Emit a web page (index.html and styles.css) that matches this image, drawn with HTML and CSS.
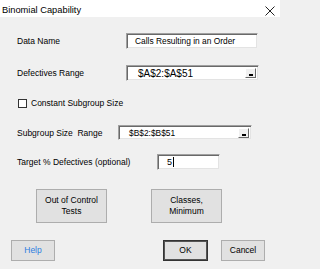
FILE: index.html
```html
<!DOCTYPE html>
<html>
<head>
<meta charset="utf-8">
<link rel="stylesheet" href="styles.css">
</head>
<body>
<div class="dialog">
  <div class="titlebar">
    <span class="title">Binomial Capability</span>
    <svg class="close" width="10" height="10" viewBox="0 0 10 10"><path d="M0.5 0.5L9.5 9.5M9.5 0.5L0.5 9.5" stroke="#222" stroke-width="1"/></svg>
  </div>
  <div class="content">
    <div class="row r1">
      <span class="label w1">Data Name</span>
      <div class="box b1"><span class="val">Calls Resulting in an Order</span></div>
    </div>
    <div class="row r2">
      <span class="label w1">Defectives Range</span>
      <div class="box b2"><span class="val v2">$A$2:$A$51</span><span class="pick"><i></i></span></div>
    </div>
    <div class="row r3">
      <span class="check"></span>
      <span class="label">Constant Subgroup Size</span>
    </div>
    <div class="row r4">
      <span class="label w4">Subgroup Size&nbsp; Range</span>
      <div class="box b4"><span class="val v4">$B$2:$B$51</span><span class="pick p4"><i></i></span></div>
    </div>
    <div class="row r5">
      <span class="label w5">Target % Defectives (optional)</span>
      <div class="box b5"><span class="val v5">5</span><span class="caret"></span></div>
    </div>
    <div class="row r6">
      <button class="btn big">Out of Control<br>Tests</button>
      <button class="btn big">Classes,<br>Minimum</button>
    </div>
    <div class="row r7">
      <button class="btn small help">Help</button>
      <span class="spacer"></span>
      <button class="btn small ok">OK</button>
      <button class="btn small">Cancel</button>
    </div>
  </div>
</div>
</body>
</html>
```
FILE: styles.css
```css
html, body { margin: 0; padding: 0; }
body {
  width: 280px; height: 269px; overflow: hidden;
  background: #f0f0f0;
  font-family: "Liberation Sans", Arial, sans-serif;
  font-size: 8.5px; color: #000;
}
.dialog { width: 280px; height: 269px; background: #f0f0f0; }
.titlebar {
  height: 17px; background: #fff;
  display: flex; align-items: center; justify-content: space-between;
  padding: 0 5px 0 2px; box-sizing: border-box;
}
.title { font-size: 9.3px; color: #000; margin-top: 3px; }
.close { margin-top: 4px; }
.content { padding-left: 17px; }
.row { display: flex; align-items: center; }
.r1 { margin-top: 16px; height: 16px; }
.r2 { margin-top: 16px; height: 16px; }
.r3 { margin-top: 17px; height: 10px; padding-left: 1px; }
.r4 { margin-top: 17px; height: 15px; }
.r5 { margin-top: 14px; height: 16px; }
.r6 { margin-top: 19px; height: 34px; padding-left: 19px; gap: 44px; }
.r7 { margin-top: 17px; height: 21px; margin-left: -6px; }
.label { white-space: nowrap; }
.w1 { width: 109px; }
.w4 { width: 101px; }
.w5 { width: 140px; }
.box {
  position: relative;
  background: #fff; box-sizing: border-box;
  border-top: 1px solid #a0a0a0; border-left: 1px solid #a0a0a0;
  border-bottom: 1px solid #f0f0f0; border-right: 1px solid #f0f0f0;
  box-shadow: inset 1px 1px 0 #696969, inset -1px -1px 0 #e3e3e3;
  display: flex; align-items: center;
}
.b1 { width: 132px; height: 16px; padding-left: 8px; }
.b2 { width: 133px; height: 16px; padding-left: 11px; }
.b4 { width: 134px; height: 15px; padding-left: 10px; }
.b5 { width: 63px; height: 16px; padding-left: 9px; }
.val { white-space: nowrap; font-size: 8.4px; }
.v2 { font-size: 10px; }
.v4 { font-size: 8.4px; }
.v5 { font-size: 9px; }
.caret { display: inline-block; width: 1px; height: 10px; background: #000; margin-left: 1px; }
.pick {
  position: absolute; right: 2px; bottom: 2px;
  width: 11px; height: 10px; box-sizing: border-box;
  background: #f0f0f0;
  border-top: 1px solid #fff; border-left: 1px solid #fff;
  border-right: 1px solid #696969; border-bottom: 1px solid #696969;
}
.pick i {
  position: absolute; left: 3px; bottom: 1px; width: 4px; height: 2px; background: #000;
}
.p4 { right: 2px; bottom: 1px; }
.check {
  width: 9px; height: 9px; box-sizing: border-box;
  border: 1px solid #333; background: #fff; margin-right: 4px;
}
.btn {
  font-family: "Liberation Sans", Arial, sans-serif;
  font-size: 8.5px; color: #000;
  background: #e1e1e1; border: 1px solid #adadad;
  padding: 0; margin: 0; line-height: 11px; box-sizing: border-box;
}
.big { width: 71px; height: 34px; }
.small { width: 44px; height: 21px; }
.help { color: #2b7de0; }
.spacer { width: 108px; }
.ok { border: 1px solid #333; box-shadow: inset 0 0 0 1px #555; margin-right: 13px; width: 45px; }
```
